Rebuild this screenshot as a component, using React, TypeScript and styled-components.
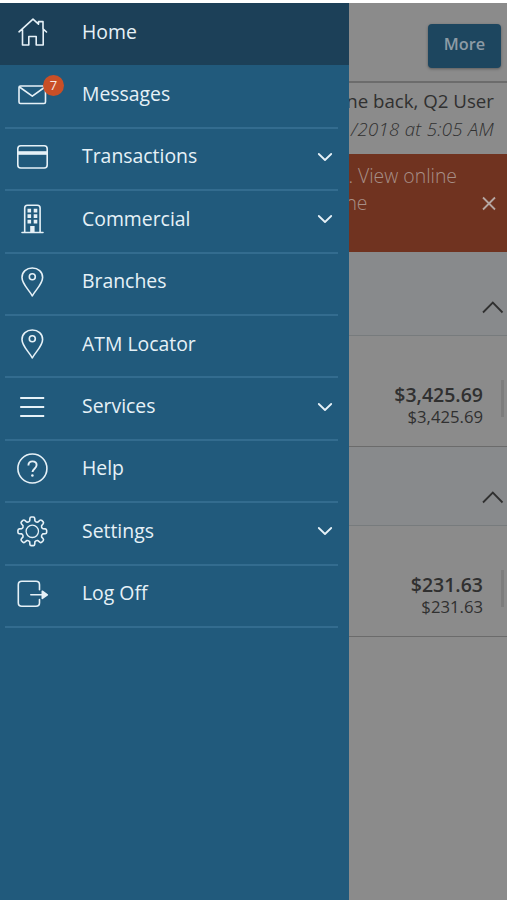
import React from "react";
import styled, { createGlobalStyle } from "styled-components";

const GlobalStyle = createGlobalStyle`
  * { box-sizing: border-box; }
  body {
    margin: 0;
    background: #fff;
    font-family: "Open Sans", "Noto Sans", sans-serif;
  }
`;

const Screen = styled.div`
  display: flex;
  width: 507px;
  height: 900px;
  padding-top: 3px;
  overflow: hidden;
`;

const Drawer = styled.nav`
  flex: none;
  width: 349.4px;
  height: 100%;
  background: #215a7c;
`;

const MenuItem = styled.div<{ $active?: boolean }>`
  position: relative;
  display: flex;
  align-items: center;
  height: 62.4px;
  padding: 0 14px 4px 17px;
  background: ${(p) => (p.$active ? "#1c4058" : "transparent")};
  color: #e6f1f7;

  &::after {
    content: "";
    display: ${(p) => (p.$active ? "none" : "block")};
    position: absolute;
    left: 5px;
    right: 11px;
    bottom: -1px;
    height: 2px;
    background: #336c8f;
  }
`;

const IconSlot = styled.span`
  position: relative;
  display: flex;
  flex: none;
  width: 31px;
  margin-right: 34px;
`;

const Badge = styled.span`
  position: absolute;
  left: 26px;
  top: -10px;
  width: 21px;
  height: 21px;
  border-radius: 50%;
  background: #c94f26;
  color: #f8e9e2;
  font-size: 13px;
  line-height: 21px;
  text-align: center;
`;

const Label = styled.span`
  flex: 1;
  margin-top: -1px;
  font-size: 19.4px;
  line-height: 26px;
`;

const Svg = styled.svg`
  display: block;
  flex: none;
  fill: none;
  stroke: currentColor;
  stroke-width: 1.6;
  stroke-linecap: round;
  stroke-linejoin: round;
  overflow: visible;
`;

const Page = styled.main`
  flex: 1;
  min-width: 0;
  height: 100%;
  background: #8b8b8b;
  color: #303030;
  overflow: hidden;
`;

const TopBar = styled.header`
  display: flex;
  justify-content: flex-end;
  height: 80px;
  padding: 21px 6px 0 0;
  border-bottom: 2px solid #6c6c6c;
`;

const MoreButton = styled.button`
  width: 73px;
  height: 44px;
  padding: 0 0 4px;
  border: 0;
  border-radius: 4px;
  background: #1d465f;
  box-shadow: 0 1px 3px rgba(0, 0, 0, 0.35);
  color: #8d9ba5;
  font: 600 16.3px "Open Sans", sans-serif;
`;

const Welcome = styled.section`
  display: flex;
  flex-direction: column;
  align-items: flex-end;
  height: 71px;
  padding: 4px 13px 0 0;
  white-space: nowrap;
`;

const Greeting = styled.div`
  font-size: 18.7px;
  line-height: 28px;
`;

const LastLogin = styled.div`
  font-size: 18.6px;
  line-height: 27px;
  letter-spacing: 0.3px;
  font-style: italic;
  font-weight: 300;
`;

const Alert = styled.section`
  display: flex;
  justify-content: space-between;
  height: 98px;
  padding: 9px 11px 0 0;
  background: #703320;
  color: #a78f87;
`;

const AlertText = styled.div`
  display: flex;
  flex-direction: column;
  align-items: flex-start;
  font-size: 19.4px;
  font-weight: 300;
  line-height: 26.5px;
  white-space: nowrap;
`;

const ClippedLine = styled.span<{ $shift: number }>`
  margin-left: ${(p) => p.$shift}px;
`;

const CloseSlot = styled.span`
  padding-top: 34px;
  color: #b5a7a2;
`;

const GroupHeader = styled.header<{ $height: number }>`
  display: flex;
  justify-content: flex-end;
  align-items: flex-end;
  height: ${(p) => p.$height}px;
  padding: 0 4px 21px 0;
  border-bottom: 1.5px solid #777b7d;
  background: #888a8c;
`;

const Account = styled.div`
  display: flex;
  justify-content: flex-end;
  height: 111px;
  padding: 44px 3px 0 0;
  border-bottom: 1.5px solid #6b6b6b;
`;

const Amounts = styled.div`
  display: flex;
  flex-direction: column;
  align-items: flex-end;
  padding: 2px 18px 0 0;
`;

const Available = styled.strong`
  font-size: 19.5px;
  font-weight: 600;
  line-height: 26px;
`;

const Current = styled.span`
  font-size: 16.7px;
  line-height: 18px;
`;

const Handle = styled.span`
  width: 3px;
  height: 37px;
  background: #7d7d7d;
`;

const HomeIcon = () => (
  <Svg width="31" height="31" viewBox="0 0 31 31">
    <path d="M2 14.8 16 2.2l5.5 5M21.5 7V4.6H26v7.2l3.5 3.2M5.5 12.5V28h6.3v-8.5h7.4V28h7V12.5" />
  </Svg>
);

const MailIcon = () => (
  <Svg width="31" height="19" viewBox="0 0 31 19">
    <rect x="2" y="1" width="26.5" height="17.5" rx="1.5" />
    <path d="m2.5 2 12.8 9.2L28 2" />
  </Svg>
);

const CardIcon = () => (
  <Svg width="31" height="24" viewBox="0 0 31 24">
    <rect x="0.8" y="0.8" width="29.4" height="22.2" rx="3" />
    <path d="M1 8h29" strokeWidth="3.6" strokeLinecap="butt" />
  </Svg>
);

const BuildingIcon = () => (
  <Svg width="31" height="30" viewBox="0 0 31 30">
    <path d="M5 28.5h21M7.7 28V4q0-2.7 2.7-2.7h10q2.7 0 2.7 2.7v24" />
    <path
      d="M10.5 4.8h3.6v3.6h-3.6zM16.7 4.8h3.6v3.6h-3.6zM10.5 10.3h3.6v3.6h-3.6zM16.7 10.3h3.6v3.6h-3.6zM10.5 15.8h3.6v3.6h-3.6zM16.7 15.8h3.6v3.6h-3.6zM13.2 22h4.4v6.5h-4.4z"
      fill="currentColor"
      stroke="none"
    />
  </Svg>
);

const PinIcon = () => (
  <Svg width="31" height="30" viewBox="0 0 31 30">
    <path d="M15.3 29C12.3 23 5 17.3 5 10.5 5 5 9.5 1 15.3 1s10.3 4 10.3 9.5c0 6.8-7.3 12.5-10.3 18.5Z" />
    <circle cx="15.3" cy="9.7" r="3" />
  </Svg>
);

const LinesIcon = () => (
  <Svg width="31" height="20" viewBox="0 0 31 20">
    <path d="M3.2 1h24M3.2 10h24M3.2 19h24" strokeLinecap="butt" strokeWidth="2" />
  </Svg>
);

const HelpIcon = () => (
  <Svg width="31" height="31" viewBox="0 0 31 31">
    <circle cx="15.4" cy="15.5" r="14.5" />
    <path
      d="M11.4 12.4c0-2.5 1.6-4 4.1-4s4.1 1.5 4.1 3.7c0 3.6-4.1 3.5-4.1 7"
      strokeWidth="1.9"
      strokeLinecap="butt"
    />
    <circle cx="15.4" cy="22.5" r="1.3" fill="currentColor" stroke="none" />
  </Svg>
);

const gearPath = (() => {
  const parts: string[] = [];
  const point = (radius: number, degrees: number) => {
    const a = (degrees * Math.PI) / 180;
    return `${(15.3 + radius * Math.cos(a)).toFixed(2)} ${(15.3 + radius * Math.sin(a)).toFixed(2)}`;
  };
  for (let i = 0; i < 8; i++) {
    const c = i * 45;
    parts.push(`${i ? "L" : "M"}${point(10.8, c - 14)}`);
    parts.push(`L${point(13.2, c - 10.5)}Q${point(14.4, c - 9)} ${point(14.4, c - 4)}`);
    parts.push(`L${point(14.4, c + 4)}Q${point(14.4, c + 9)} ${point(13.2, c + 10.5)}`);
    parts.push(`L${point(10.8, c + 14)}Q${point(9.6, c + 22.5)} ${point(10.8, c + 31)}`);
  }
  return parts.join("") + "Z";
})();

const GearIcon = () => (
  <Svg width="31" height="31" viewBox="0 0 31 31">
    <path d={gearPath} />
    <circle cx="15.3" cy="15.3" r="6.2" strokeWidth="1.3" />
  </Svg>
);

const LogOffIcon = () => (
  <Svg width="31" height="28" viewBox="0 0 31 28">
    <path d="M22.5 9.8V4.8q0-3.5-3.5-3.5H4.8q-3.5 0-3.5 3.5v18q0 3.5 3.5 3.5H19q3.5 0 3.5-3.5v-3.3M13.8 14.8h11" />
    <path d="m25.3 11.2 5 3.6-5 3.6Z" fill="currentColor" />
  </Svg>
);

const ChevronDown = () => (
  <Svg width="20" height="10" viewBox="0 0 20 10">
    <path d="m3.8 2 6.2 6 6.2-6" strokeWidth="1.8" />
  </Svg>
);

const ChevronUp = () => (
  <Svg width="21" height="13" viewBox="0 0 21 13">
    <path d="M1 11.5 10.8 1.5 20.5 11.5" strokeWidth="1.8" strokeLinecap="butt" strokeLinejoin="miter" />
  </Svg>
);

const CloseIcon = () => (
  <Svg width="14" height="14" viewBox="0 0 14 14">
    <path d="m1 0.5 12 12M13 0.5l-12 12" strokeWidth="1.8" strokeLinecap="butt" />
  </Svg>
);

const menu = [
  { label: "Home", Icon: HomeIcon, active: true },
  { label: "Messages", Icon: MailIcon, badge: 7 },
  { label: "Transactions", Icon: CardIcon, expandable: true },
  { label: "Commercial", Icon: BuildingIcon, expandable: true },
  { label: "Branches", Icon: PinIcon },
  { label: "ATM Locator", Icon: PinIcon },
  { label: "Services", Icon: LinesIcon, expandable: true },
  { label: "Help", Icon: HelpIcon },
  { label: "Settings", Icon: GearIcon, expandable: true },
  { label: "Log Off", Icon: LogOffIcon },
];

const accounts = [
  { amount: "$3,425.69", headerHeight: 84 },
  { amount: "$231.63", headerHeight: 79 },
];

export default function App() {
  return (
    <>
      <GlobalStyle />
      <Screen>
        <Drawer>
          {menu.map(({ label, Icon, active, badge, expandable }) => (
            <MenuItem key={label} $active={active}>
              <IconSlot>
                <Icon />
                {badge && <Badge>{badge}</Badge>}
              </IconSlot>
              <Label>{label}</Label>
              {expandable && <ChevronDown />}
            </MenuItem>
          ))}
        </Drawer>
        <Page>
          <TopBar>
            <MoreButton>More</MoreButton>
          </TopBar>
          <Welcome>
            <Greeting>ne back, Q2 User</Greeting>
            <LastLogin>/2018 at 5:05 AM</LastLogin>
          </Welcome>
          <Alert>
            <AlertText>
              <ClippedLine $shift={-1}>. View online</ClippedLine>
              <ClippedLine $shift={-4}>ne</ClippedLine>
            </AlertText>
            <CloseSlot>
              <CloseIcon />
            </CloseSlot>
          </Alert>
          {accounts.map(({ amount, headerHeight }) => (
            <section key={amount}>
              <GroupHeader $height={headerHeight}>
                <ChevronUp />
              </GroupHeader>
              <Account>
                <Amounts>
                  <Available>{amount}</Available>
                  <Current>{amount}</Current>
                </Amounts>
                <Handle />
              </Account>
            </section>
          ))}
        </Page>
      </Screen>
    </>
  );
}
